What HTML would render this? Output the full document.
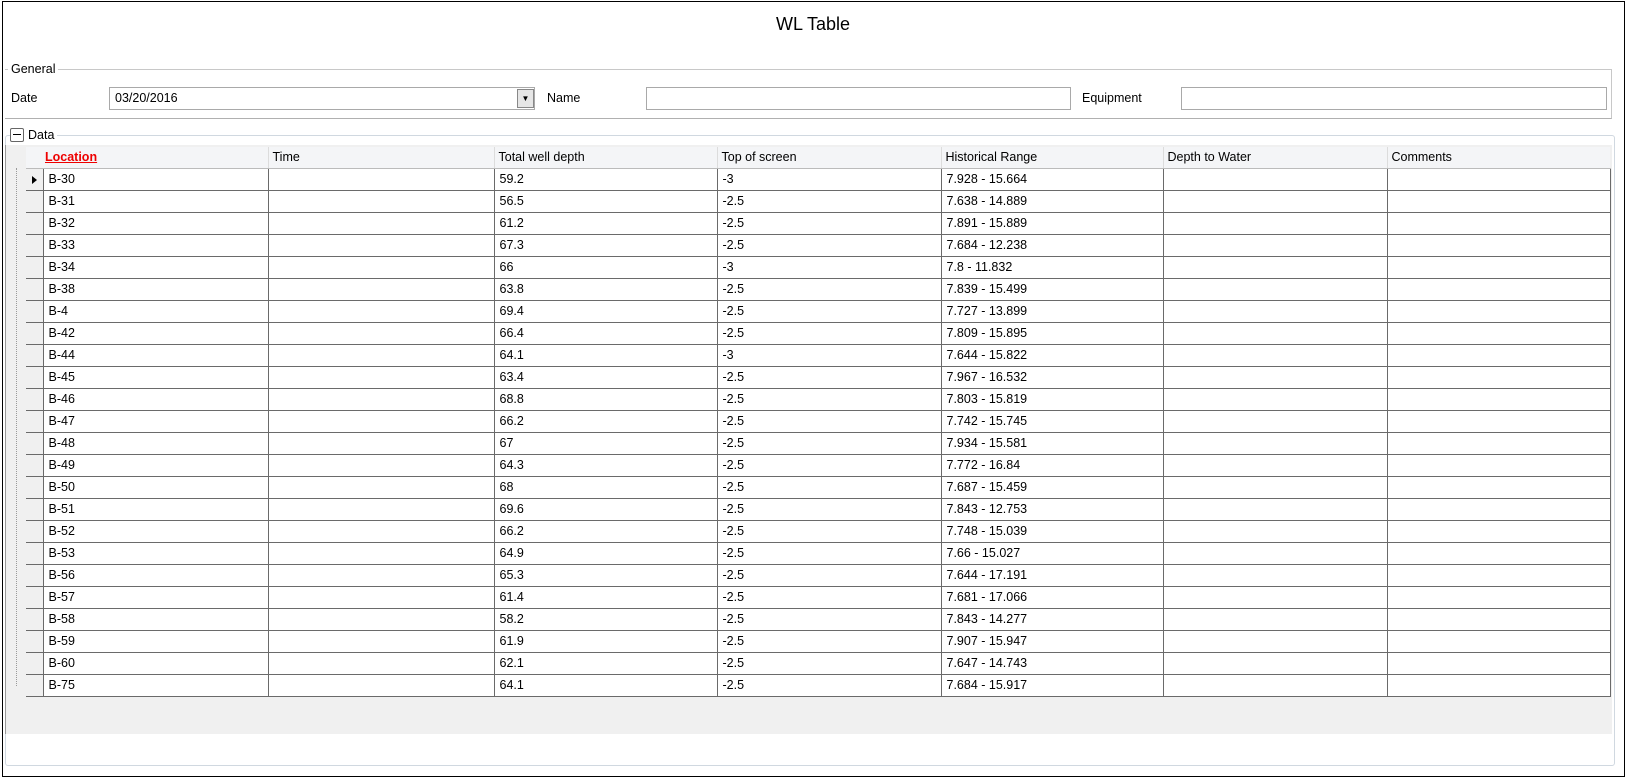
<!DOCTYPE html>
<html><head><style>
*{margin:0;padding:0;box-sizing:border-box}
body{width:1628px;height:778px;background:#fff;font-family:"Liberation Sans",sans-serif;font-size:12.5px;color:#000;position:relative;overflow:hidden}
.a{position:absolute}
.frame{left:2px;top:1px;width:1623px;height:776px;border:1px solid #000}
.title{left:0;width:1626px;top:14px;text-align:center;font-size:18px}
.gb{border:1px solid #c8c8c8}
.inp{border:1px solid #a9a9a9;background:#fff;height:23px;padding:3px 5px}
table{border-collapse:collapse;position:absolute;left:26px;top:147px;table-layout:fixed}
td{border:1px solid #6a6a6a;height:22px;padding:0 0 0 5px;white-space:nowrap;overflow:hidden;line-height:20px;background:#fff}
td.rh{background:#f0f0f0;border-left:none;padding:0;position:relative}
th{height:21px;background:#f4f5f7;font-weight:normal;text-align:left;padding-left:4px;border-left:1px solid #dcdcdc;border-bottom:1px solid #bbb}
</style></head><body>
<div class="a frame"></div>
<div class="a title">WL Table</div>
<div class="a gb" style="left:5px;top:69px;width:1607px;height:50px;border-left:none;border-bottom-color:#b0b0b0"></div>
<div class="a" style="left:8px;top:62px;background:#fff;padding:0 3px">General</div>
<div class="a" style="left:11px;top:91px">Date</div>
<div class="a inp" style="left:109px;top:87px;width:426px">03/20/2016</div>
<div class="a" style="left:517px;top:89px;width:17px;height:19px;background:#e6e6e6;border:1px solid #888;font-size:8px;text-align:center;line-height:17px">▼</div>
<div class="a" style="left:547px;top:91px">Name</div>
<div class="a inp" style="left:646px;top:87px;width:425px"></div>
<div class="a" style="left:1082px;top:91px">Equipment</div>
<div class="a inp" style="left:1181px;top:87px;width:426px"></div>
<div class="a gb" style="left:5px;top:135px;width:1610px;height:631px;border-color:#d0d8e0;border-radius:3px"></div>
<div class="a" style="left:10px;top:128px;background:#fff;padding:0 3px 0 0;display:flex;align-items:center"><span style="display:inline-block;width:14px;height:14px;border:1px solid #666;border-radius:2px;position:relative;margin-right:4px"><span style="position:absolute;left:2px;top:5px;width:8px;height:1px;background:#000"></span></span>Data</div>
<div class="a" style="left:5px;top:145px;width:1607px;height:589px;background:#f0f0f0;border-left:1px solid #999"></div>
<div class="a" style="left:16px;top:168px;width:1px;height:518px;border-left:1px dotted #999"></div>
<table>
<colgroup><col style="width:17px"><col style="width:225px"><col style="width:226px"><col style="width:223px"><col style="width:224px"><col style="width:222px"><col style="width:224px"><col style="width:223px"></colgroup>
<tr><th style="border-left:none;padding-left:2px"></th><th style="border-left:none;padding-left:2px"><b style="color:#e00;text-decoration:underline">Location</b></th><th>Time</th><th>Total well depth</th><th>Top of screen</th><th>Historical Range</th><th>Depth to Water</th><th>Comments</th></tr>
<tr><td class="rh"><span style="position:absolute;left:6px;top:7px;border-left:5px solid #000;border-top:4px solid transparent;border-bottom:4px solid transparent"></span></td><td>B-30</td><td></td><td>59.2</td><td>-3</td><td>7.928 - 15.664</td><td></td><td></td></tr>
<tr><td class="rh"></td><td>B-31</td><td></td><td>56.5</td><td>-2.5</td><td>7.638 - 14.889</td><td></td><td></td></tr>
<tr><td class="rh"></td><td>B-32</td><td></td><td>61.2</td><td>-2.5</td><td>7.891 - 15.889</td><td></td><td></td></tr>
<tr><td class="rh"></td><td>B-33</td><td></td><td>67.3</td><td>-2.5</td><td>7.684 - 12.238</td><td></td><td></td></tr>
<tr><td class="rh"></td><td>B-34</td><td></td><td>66</td><td>-3</td><td>7.8 - 11.832</td><td></td><td></td></tr>
<tr><td class="rh"></td><td>B-38</td><td></td><td>63.8</td><td>-2.5</td><td>7.839 - 15.499</td><td></td><td></td></tr>
<tr><td class="rh"></td><td>B-4</td><td></td><td>69.4</td><td>-2.5</td><td>7.727 - 13.899</td><td></td><td></td></tr>
<tr><td class="rh"></td><td>B-42</td><td></td><td>66.4</td><td>-2.5</td><td>7.809 - 15.895</td><td></td><td></td></tr>
<tr><td class="rh"></td><td>B-44</td><td></td><td>64.1</td><td>-3</td><td>7.644 - 15.822</td><td></td><td></td></tr>
<tr><td class="rh"></td><td>B-45</td><td></td><td>63.4</td><td>-2.5</td><td>7.967 - 16.532</td><td></td><td></td></tr>
<tr><td class="rh"></td><td>B-46</td><td></td><td>68.8</td><td>-2.5</td><td>7.803 - 15.819</td><td></td><td></td></tr>
<tr><td class="rh"></td><td>B-47</td><td></td><td>66.2</td><td>-2.5</td><td>7.742 - 15.745</td><td></td><td></td></tr>
<tr><td class="rh"></td><td>B-48</td><td></td><td>67</td><td>-2.5</td><td>7.934 - 15.581</td><td></td><td></td></tr>
<tr><td class="rh"></td><td>B-49</td><td></td><td>64.3</td><td>-2.5</td><td>7.772 - 16.84</td><td></td><td></td></tr>
<tr><td class="rh"></td><td>B-50</td><td></td><td>68</td><td>-2.5</td><td>7.687 - 15.459</td><td></td><td></td></tr>
<tr><td class="rh"></td><td>B-51</td><td></td><td>69.6</td><td>-2.5</td><td>7.843 - 12.753</td><td></td><td></td></tr>
<tr><td class="rh"></td><td>B-52</td><td></td><td>66.2</td><td>-2.5</td><td>7.748 - 15.039</td><td></td><td></td></tr>
<tr><td class="rh"></td><td>B-53</td><td></td><td>64.9</td><td>-2.5</td><td>7.66 - 15.027</td><td></td><td></td></tr>
<tr><td class="rh"></td><td>B-56</td><td></td><td>65.3</td><td>-2.5</td><td>7.644 - 17.191</td><td></td><td></td></tr>
<tr><td class="rh"></td><td>B-57</td><td></td><td>61.4</td><td>-2.5</td><td>7.681 - 17.066</td><td></td><td></td></tr>
<tr><td class="rh"></td><td>B-58</td><td></td><td>58.2</td><td>-2.5</td><td>7.843 - 14.277</td><td></td><td></td></tr>
<tr><td class="rh"></td><td>B-59</td><td></td><td>61.9</td><td>-2.5</td><td>7.907 - 15.947</td><td></td><td></td></tr>
<tr><td class="rh"></td><td>B-60</td><td></td><td>62.1</td><td>-2.5</td><td>7.647 - 14.743</td><td></td><td></td></tr>
<tr><td class="rh"></td><td>B-75</td><td></td><td>64.1</td><td>-2.5</td><td>7.684 - 15.917</td><td></td><td></td></tr>
</table>
</body></html>
